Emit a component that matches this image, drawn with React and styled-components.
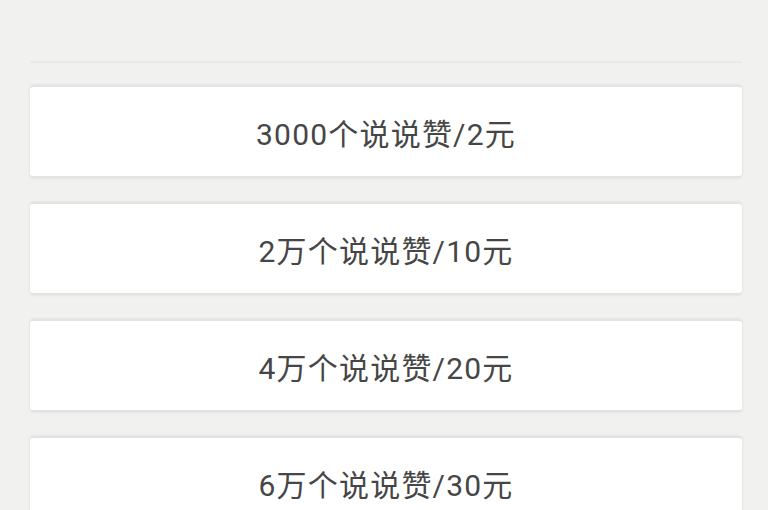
import React from "react";
import styled, { createGlobalStyle } from "styled-components";

const GlobalStyle = createGlobalStyle`
  html, body {
    margin: 0;
    padding: 0;
    background: #f1f1ef;
  }
  body {
    font-family: Roboto, "Noto Sans CJK SC", sans-serif;
  }
`;

const Page = styled.div`
  width: 768px;
  height: 510px;
  overflow: hidden;
  box-sizing: border-box;
  padding: 61px 26px 0 30px;
  background: #f1f1ef;
`;

const Divider = styled.div`
  height: 2px;
  background: #e9e9e7;
  margin-bottom: 22px;
`;

const List = styled.div`
  display: flex;
  flex-direction: column;
  gap: 24px;
`;

const Card = styled.div`
  height: 93px;
  display: flex;
  align-items: center;
  justify-content: center;
  background: #fff;
  border-radius: 4px;
  border-top: 2px solid #e3e3e1;
  border-bottom: 2px solid #e3e3e1;
  box-sizing: border-box;
  box-shadow: 0 0 3px rgba(0, 0, 0, 0.1);
  color: #464646;
  font-size: 30px;
  letter-spacing: 1.2px;
`;

const items = [
  "3000个说说赞/2元",
  "2万个说说赞/10元",
  "4万个说说赞/20元",
  "6万个说说赞/30元",
];

export default function App() {
  return (
    <>
      <GlobalStyle />
      <Page>
        <Divider />
        <List>
          {items.map((t) => (
            <Card key={t}>{t}</Card>
          ))}
        </List>
      </Page>
    </>
  );
}
